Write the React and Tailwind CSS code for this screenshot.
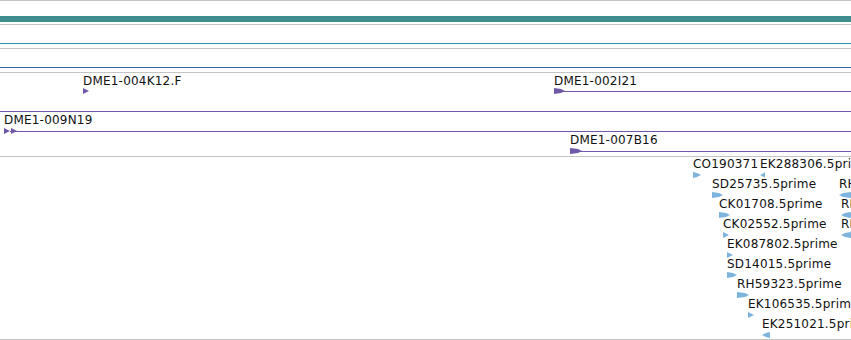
import React from "react";

const PURPLE = "#6f58a8";
const EST = "#7db4dd";

// right-pointing glyph, w x 6
function RightArrow({ w = 9, color }) {
  return (
    <svg width={w} height="6" viewBox={`0 0 ${w} 6`} className="block">
      <polygon points={`0,0 ${w - 4},1 ${w},3 ${w - 4},5 0,6`} fill={color} />
    </svg>
  );
}

function LeftArrow({ w = 6, color }) {
  return (
    <svg width={w} height="6" viewBox={`0 0 ${w} 6`} className="block">
      <polygon points={`${w},0 4,1 0,3 4,5 ${w},6`} fill={color} />
    </svg>
  );
}

function Tri({ color }) {
  return (
    <svg width="6" height="6" viewBox="0 0 6 6" className="block">
      <polygon points="0,0 6,3 0,6" fill={color} />
    </svg>
  );
}

function Label({ x, y, children }) {
  return (
    <span
      className="absolute whitespace-nowrap text-[12px] leading-[14px] tracking-[0.2px] text-[#111]"
      style={{ left: x, top: y, fontFamily: '"DejaVu Sans", sans-serif' }}
    >
      {children}
    </span>
  );
}

function Glyph({ x, y, children }) {
  return (
    <div className="absolute" style={{ left: x, top: y }}>
      {children}
    </div>
  );
}

function HLine({ x = 0, y, color }) {
  return (
    <div
      className="absolute right-0 h-px"
      style={{ left: x, top: y, backgroundColor: color }}
    />
  );
}

const ests = [
  { row: 0, x: 693, label: "CO190371", dir: "r", w: 8 },
  { row: 0, x: 760, label: "EK288306.5prime", dir: "l", w: 5 },
  { row: 1, x: 712, label: "SD25735.5prime", dir: "r", w: 11 },
  { row: 1, x: 839, label: "RH59323.5prime", dir: "l", w: 12 },
  { row: 2, x: 719, label: "CK01708.5prime", dir: "r", w: 11 },
  { row: 2, x: 841, label: "RH28473.5prime", dir: "l", w: 10 },
  { row: 3, x: 723, label: "CK02552.5prime", dir: "r", w: 6 },
  { row: 3, x: 841, label: "RH38126.5prime", dir: "l", w: 10 },
  { row: 4, x: 727, label: "EK087802.5prime", dir: "r", w: 6 },
  { row: 5, x: 727, label: "SD14015.5prime", dir: "r", w: 10 },
  { row: 6, x: 737, label: "RH59323.5prime", dir: "r", w: 12 },
  { row: 7, x: 748, label: "EK106535.5prime", dir: "r", w: 6 },
  { row: 8, x: 762, label: "EK251021.5prime", dir: "l", w: 8 },
];

export default function App() {
  return (
    <div className="flex flex-col w-[851px] h-[340px] overflow-hidden bg-white">
      {/* track: overview bar */}
      <div className="h-[25px] pt-[15px] border-y border-[#c4c4c4]">
        <div className="h-[6px] bg-[#3f8e8e]" />
      </div>

      {/* track: thin teal */}
      <div className="h-[24px] pt-[18px] border-b border-[#c4c4c4]">
        <div className="h-px bg-[#2a93a8]" />
      </div>

      {/* track: thin blue */}
      <div className="h-[24px] pt-[18px] border-b border-[#c4c4c4]">
        <div className="h-px bg-[#3563a8]" />
      </div>

      {/* track: BAC clones */}
      <div className="relative h-[84px] shrink-0 border-b border-[#c4c4c4]">
        <Label x={83} y={1}>DME1-004K12.F</Label>
        <Glyph x={83} y={15}>
          <Tri color={PURPLE} />
        </Glyph>

        <Label x={554} y={1}>DME1-002I21</Label>
        <HLine x={560} y={18} color={PURPLE} />
        <Glyph x={554} y={15}>
          <RightArrow w={11} color={PURPLE} />
        </Glyph>

        <HLine y={38} color={PURPLE} />

        <Label x={4} y={40}>DME1-009N19</Label>
        <HLine x={10} y={58} color={PURPLE} />
        <Glyph x={4} y={55}>
          <div className="flex gap-px">
            <Tri color={PURPLE} />
            <Tri color={PURPLE} />
          </div>
        </Glyph>

        <Label x={570} y={60}>DME1-007B16</Label>
        <HLine x={576} y={78} color={PURPLE} />
        <Glyph x={570} y={75}>
          <RightArrow w={12} color={PURPLE} />
        </Glyph>
      </div>

      {/* track: ESTs */}
      <div className="relative h-[183px] shrink-0 border-b border-[#c4c4c4]">
        {ests.map((e, i) => (
          <React.Fragment key={i}>
            <Label x={e.x} y={e.row * 20}>
              {e.label}
            </Label>
            <Glyph x={e.x} y={e.row * 20 + 15}>
              {e.dir === "r" ? (
                <RightArrow w={e.w} color={EST} />
              ) : (
                <LeftArrow w={e.w} color={EST} />
              )}
            </Glyph>
          </React.Fragment>
        ))}
      </div>
    </div>
  );
}
